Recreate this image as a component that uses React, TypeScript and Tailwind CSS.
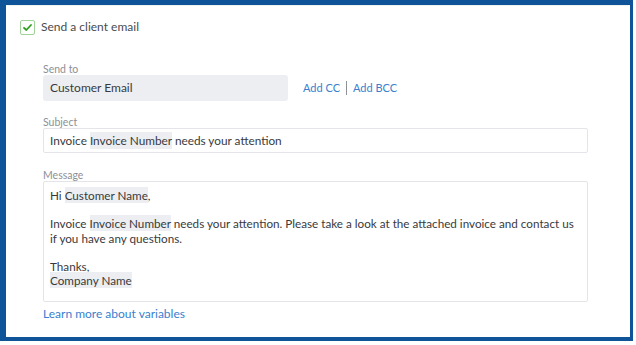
import React from 'react';

// Highlighted merge-field token inside the email template
const Token: React.FC<{ children: React.ReactNode }> = ({ children }) => (
  <span className="bg-[#eceef1] py-[1px]">{children}</span>
);

const Label: React.FC<{ children: React.ReactNode }> = ({ children }) => (
  <div className="text-[10.5px] leading-[12px] text-[#8d9096]">{children}</div>
);

export default function App() {
  return (
    <div className="w-[636px] h-[345px] bg-white font-['Lato',_'Open_Sans',_sans-serif] text-[#393a3d]">
      <div className="w-[633px] h-[341px] border-t-[5px] border-l-[6px] border-r-[3px] border-b-[4px] border-[#0f5399] flex flex-col">
        <div className="h-px bg-[#eef3f0]" />

        {/* Checkbox row */}
        <div className="flex items-center gap-[6px] pl-[14px] mt-[13px]">
          <div className="w-[15px] h-[15px] border border-[#9fd398] rounded-[2px] flex items-center justify-center bg-white">
            <svg width="11" height="11" viewBox="0 0 11 11" fill="none">
              <polyline points="2,5.8 4.4,8 9,3" stroke="#2ca01c" strokeWidth="1.8" strokeLinecap="round" strokeLinejoin="round" />
            </svg>
          </div>
          <span className="text-[12px] leading-[16px] text-[#4a4b4e]">Send a client email</span>
        </div>

        {/* Form */}
        <div className="flex flex-col pl-[37px] w-[582px]">
          <div className="mt-[28px]">
            <Label>Send to</Label>
          </div>
          <div className="flex items-center">
            <div className="w-[245px] h-[26px] bg-[#eceef1] rounded-[3px] flex items-center px-[7px] text-[12px]">
              Customer Email
            </div>
            <div className="flex items-center ml-[15px] text-[11px] text-[#3a7fce]">
              <span>Add CC</span>
              <span className="w-px h-[14px] bg-[#8d9096] mx-[6px]" />
              <span>Add BCC</span>
            </div>
          </div>

          <div className="mt-[15px]">
            <Label>Subject</Label>
          </div>
          <div className="h-[25px] border border-[#e3e5e8] rounded-[2px] flex items-center px-[6px] text-[11.8px]">
            <span className="whitespace-pre">Invoice <Token>Invoice Number</Token> needs your attention</span>
          </div>

          <div className="mt-[16px]">
            <Label>Message</Label>
          </div>
          <div className="h-[121px] border border-[#e3e5e8] rounded-[2px] pl-[6px] pr-[4px] pt-[6px] text-[11.7px] leading-[14.2px]">
            <div>Hi <Token>Customer Name</Token>,</div>
            <div className="h-[14.2px]" />
            <div>
              Invoice <Token>Invoice Number</Token> needs your attention. Please take a look at the attached invoice and contact us if you have any questions.
            </div>
            <div className="h-[14.2px]" />
            <div>Thanks,</div>
            <div><Token>Company Name</Token></div>
          </div>

          <div className="mt-[4px] text-[12px] leading-[16px] text-[#3a7fce]">Learn more about variables</div>
        </div>
      </div>
    </div>
  );
}
